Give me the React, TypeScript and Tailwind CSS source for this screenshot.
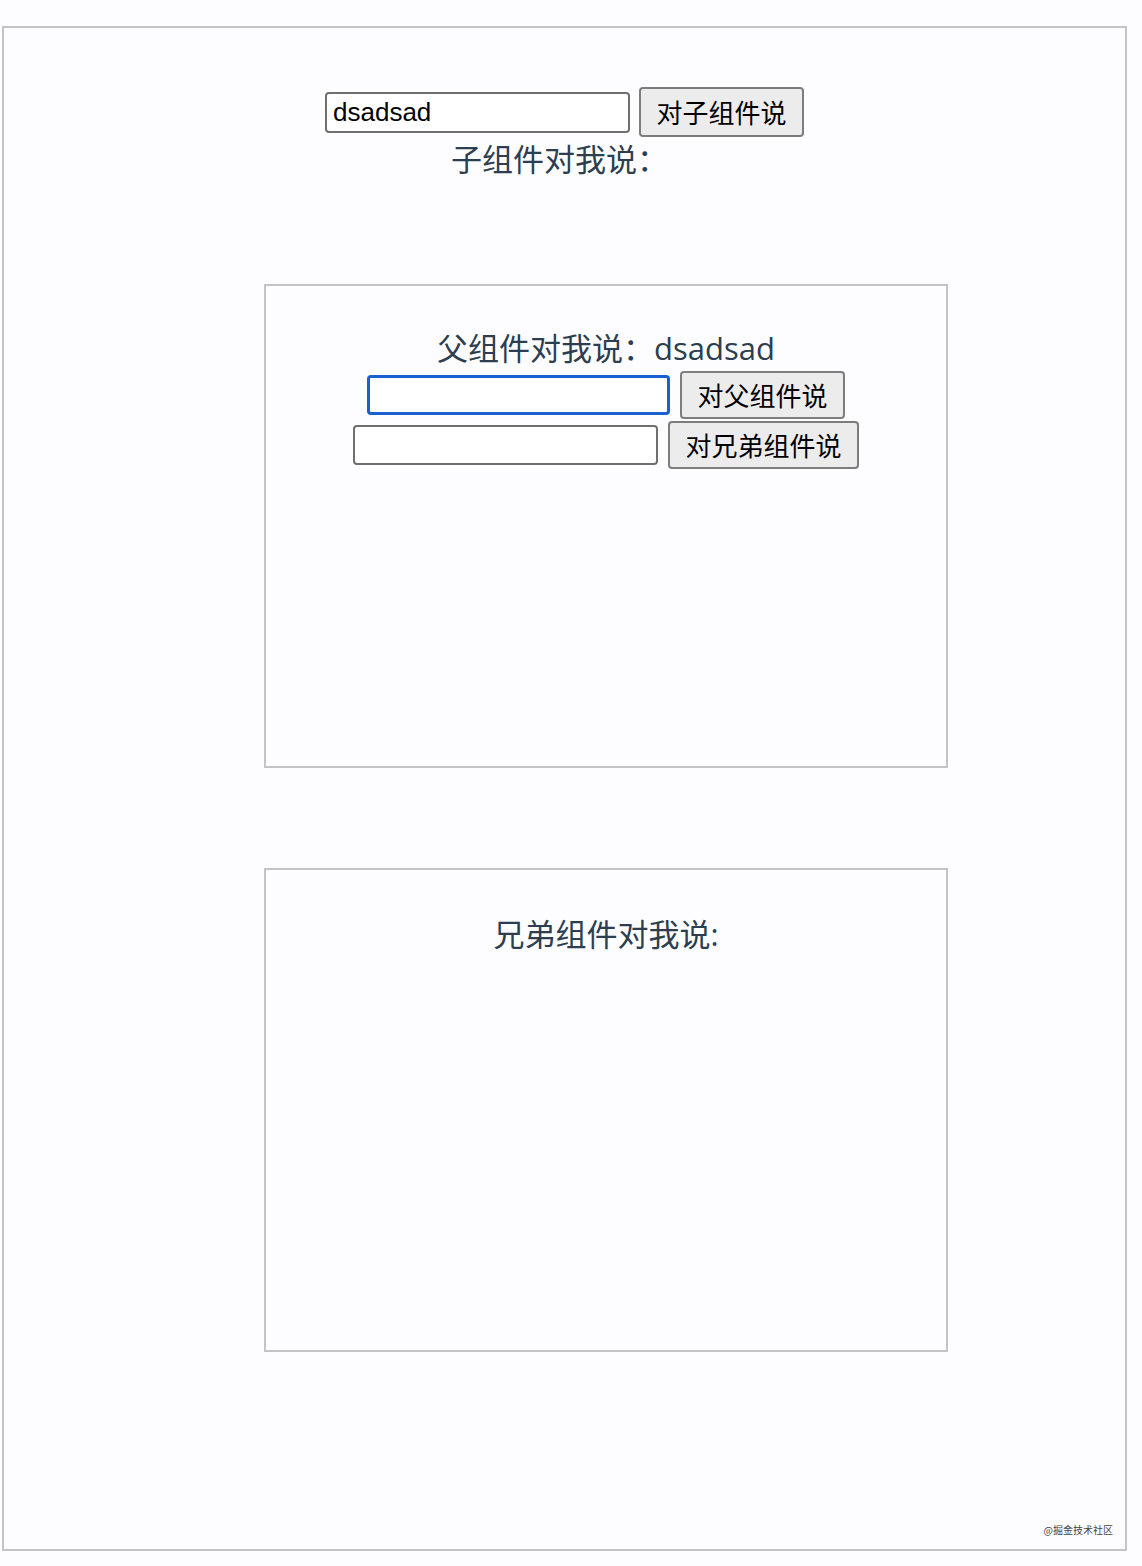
import React from "react";

function Btn({ label, w, h }: { label: string; w: string; h: string }) {
  return (
    <button
      className={`${w} ${h} shrink-0 rounded-[4px] border-2 border-[#7d7d7d] bg-[#ececec] font-['Noto_Sans_CJK_SC',sans-serif] text-[26px] leading-none text-black`}
    >
      {label}
    </button>
  );
}

export default function App() {
  return (
    <div className="relative min-h-[1566px] w-[1142px] bg-[#fdfdff] pt-[26px] pl-[2px] font-['Noto_Sans_CJK_SC',sans-serif]">
      <div className="relative h-[1525px] w-[1125px] border-2 border-[#c4c4c4] pt-[59px]">
        <div className="flex items-center justify-center gap-[9px]">
          <input
            readOnly
            value="dsadsad"
            className="h-[41px] w-[305px] rounded-[4px] border-2 border-[#6f6f6f] bg-white px-[6px] font-['Liberation_Sans',Arial,sans-serif] text-[26px] text-black outline-none"
          />
          <Btn label="对子组件说" w="w-[165px]" h="h-[50px]" />
        </div>
        <div className="mt-[2px] h-[40px] pr-[10px] text-center font-['Open_Sans','Noto_Sans_CJK_SC',sans-serif] text-[31px] leading-[40px] text-[#2c3e50]">
          子组件对我说：
        </div>

        <div className="ml-[260px] mt-[105px] flex h-[484px] w-[684px] flex-col items-center border-2 border-[#c4c4c4] pt-[42px]">
          <div className="h-[40px] font-['Open_Sans','Noto_Sans_CJK_SC',sans-serif] text-[31px] leading-[40px] text-[#2c3e50]">
            父组件对我说：dsadsad
          </div>
          <div className="mt-[2px] flex h-[50px] items-center gap-[10px]">
            <input
              readOnly
              className="h-[40px] w-[303px] rounded-[4px] border-[3px] border-[#1a5fd3] bg-white px-[5px] text-[26px] outline-none"
            />
            <Btn label="对父组件说" w="w-[165px]" h="h-[48px]" />
          </div>
          <div className="flex h-[50px] items-center gap-[10px]">
            <input
              readOnly
              className="h-[40px] w-[305px] rounded-[4px] border-2 border-[#6f6f6f] bg-white px-[5px] text-[26px] outline-none"
            />
            <Btn label="对兄弟组件说" w="w-[191px]" h="h-[48px]" />
          </div>
        </div>

        <div className="ml-[260px] mt-[100px] flex h-[484px] w-[684px] flex-col items-center border-2 border-[#c4c4c4] pt-[44px]">
          <div className="h-[40px] font-['Open_Sans','Noto_Sans_CJK_SC',sans-serif] text-[31px] leading-[40px] text-[#2c3e50]">
            兄弟组件对我说:
          </div>
        </div>

        <div className="absolute right-[12px] bottom-[14px] text-[10px] leading-none text-[#444]">
          @掘金技术社区
        </div>
      </div>
    </div>
  );
}
